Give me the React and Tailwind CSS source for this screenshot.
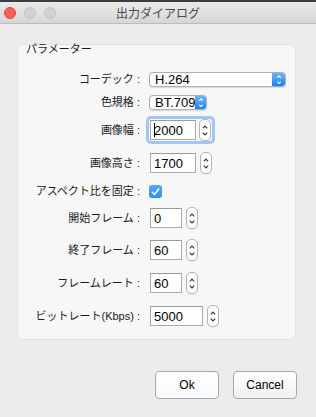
import React from "react";

const jp = { fontFamily: '"Liberation Sans","Noto Sans CJK JP",sans-serif' };

function Stepper() {
  return (
    <div className="ml-[4px] w-[12px] h-[22px] rounded-[5px] border border-[#b4b4b4] bg-white flex flex-col items-center justify-center gap-[3px] shadow-[0_0.5px_0.5px_rgba(0,0,0,0.08)]">
      <svg width="6" height="4" viewBox="0 0 6 4">
        <path d="M0.8 3.3 L3 1 L5.2 3.3" fill="none" stroke="#333" strokeWidth="1.1" />
      </svg>
      <svg width="6" height="4" viewBox="0 0 6 4">
        <path d="M0.8 0.7 L3 3 L5.2 0.7" fill="none" stroke="#333" strokeWidth="1.1" />
      </svg>
    </div>
  );
}

function Field({ value, w, caret }) {
  return (
    <div
      className="h-[20px] border border-[#aaaaaa] border-t-[#9a9a9a] bg-white flex items-center pl-[3px] text-[13px] text-black leading-none"
      style={{ width: w, fontFamily: '"Liberation Sans",sans-serif' }}
    >
      {caret && <span className="inline-block w-[1px] h-[14px] bg-black mr-[-1px]" />}
      {value}
    </div>
  );
}

function Popup({ value, w }) {
  return (
    <div
      className="h-[15px] rounded-[4px] border border-[#b0b0b0] bg-white flex items-stretch overflow-hidden shadow-[0_0.5px_1px_rgba(0,0,0,0.12)]"
      style={{ width: w }}
    >
      <div
        className="flex-1 flex items-center pl-[5px] text-[13px] leading-none text-black"
        style={{ fontFamily: '"Liberation Sans",sans-serif' }}
      >
        {value}
      </div>
      <div className="w-[13px] bg-gradient-to-b from-[#6cb4fb] to-[#1581fc] flex flex-col items-center justify-center gap-[2px]">
        <svg width="6" height="3.5" viewBox="0 0 6 4">
          <path d="M1 3.2 L3 1 L5 3.2" fill="none" stroke="#fff" strokeWidth="1.2" />
        </svg>
        <svg width="6" height="3.5" viewBox="0 0 6 4">
          <path d="M1 0.8 L3 3 L5 0.8" fill="none" stroke="#fff" strokeWidth="1.2" />
        </svg>
      </div>
    </div>
  );
}

function Row({ label, h, mt, ml, children }) {
  return (
    <div className="flex items-center" style={{ height: h, marginTop: mt }}>
      <div className="w-[122px] text-right text-[11px] leading-none text-[#1a1a1a] whitespace-nowrap" style={jp}>
        {label} :
      </div>
      <div className="flex items-center" style={{ marginLeft: ml }}>
        {children}
      </div>
    </div>
  );
}

export default function App() {
  return (
    <div className="w-[316px] h-[417px] bg-[#ececec] flex flex-col overflow-hidden" style={jp}>
      <div className="h-[2px] bg-[#3e3e3e]" />
      <div className="h-[22px] bg-gradient-to-b from-[#ebebeb] to-[#d6d6d6] border-b border-[#bdbdbd] flex items-center relative">
        <div className="flex items-center gap-[8px] pl-[4px]">
          <div className="w-[12px] h-[12px] rounded-full bg-[#fc5f57] border border-[#e14942]" />
          <div className="w-[12px] h-[12px] rounded-full bg-[#d2d2d2] border border-[#c3c3c3]" />
          <div className="w-[12px] h-[12px] rounded-full bg-[#d2d2d2] border border-[#c3c3c3]" />
        </div>
        <div className="absolute inset-0 flex items-center justify-center text-[12px] text-[#4a4a4a] leading-none" style={{ fontFamily: '"Noto Sans CJK JP",sans-serif' }}>
          出力ダイアログ
        </div>
      </div>

      <div className="mt-[20px] ml-[17px] w-[279px] h-[296px] bg-[#f7f7f7] border border-[#e2e2e2] rounded-[6px] flex flex-col">
        <div className="-mt-[3px] pl-[8px] h-[14px] flex items-center text-[11px] leading-none text-[#1a1a1a]">
          パラメーター
        </div>
        <Row label="コーデック" h={15} mt={16} ml={9}>
          <Popup value="H.264" w={137} />
        </Row>
        <Row label="色規格" h={15} mt={8} ml={9}>
          <Popup value="BT.709" w={58} />
        </Row>
        <Row label="画像幅" h={28} mt={6} ml={6}>
          <div className="h-[28px] rounded-[5px] border-[3px] border-[#a2c6f4] p-[1px] flex items-center">
            <Field value="2000" w={46} caret />
            <div className="-ml-[1px]">
              <Stepper />
            </div>
          </div>
        </Row>
        <Row label="画像高さ" h={22} mt={8} ml={10}>
          <Field value="1700" w={46} />
          <Stepper />
        </Row>
        <Row label="アスペクト比を固定" h={13} mt={11} ml={9}>
          <div className="w-[13px] h-[13px] rounded-[3px] bg-gradient-to-b from-[#58a8fc] to-[#2f8cfb] flex items-center justify-center">
            <svg width="9" height="8" viewBox="0 0 9 8">
              <path d="M1.3 4.2 L3.5 6.5 L7.8 1" fill="none" stroke="#fff" strokeWidth="1.4" strokeLinecap="round" strokeLinejoin="round" />
            </svg>
          </div>
        </Row>
        <Row label="開始フレーム" h={22} mt={9} ml={10}>
          <Field value="0" w={32} />
          <Stepper />
        </Row>
        <Row label="終了フレーム" h={22} mt={10} ml={10}>
          <Field value="60" w={32} />
          <Stepper />
        </Row>
        <Row label="フレームレート" h={22} mt={11} ml={10}>
          <Field value="60" w={32} />
          <Stepper />
        </Row>
        <Row label="ビットレート(Kbps)" h={22} mt={11} ml={10}>
          <Field value="5000" w={53} />
          <Stepper />
        </Row>
      </div>

      <div className="mt-[31px] flex justify-end gap-[14px] pr-[19px]">
        <button className="w-[64px] h-[28px] rounded-[4px] border border-[#a9a9a9] bg-gradient-to-b from-white to-[#f7f9fc] text-[12px] text-black" style={{ fontFamily: '"Liberation Sans",sans-serif' }}>
          Ok
        </button>
        <button className="w-[64px] h-[28px] rounded-[4px] border border-[#a9a9a9] bg-gradient-to-b from-white to-[#f1f1f1] text-[12px] text-black" style={{ fontFamily: '"Liberation Sans",sans-serif' }}>
          Cancel
        </button>
      </div>
    </div>
  );
}
